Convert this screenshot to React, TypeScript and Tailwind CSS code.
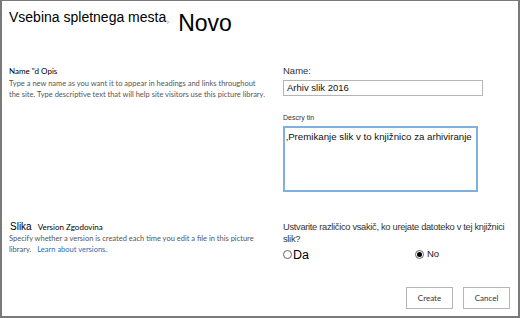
import { Fragment } from "react"

const ui = { fontFamily: 'Lato, "Liberation Sans", sans-serif' }

export default function App() {
  return (
    <div
      className="w-[520px] h-[318px] border-2 border-t border-[#7a7a7a] bg-white flex flex-col text-black"
      style={{ fontFamily: '"Liberation Sans", Arial, sans-serif' }}
    >
      {/* header */}
      <div className="flex items-start pl-[7px] pt-[5px] h-[60px]">
        <span className="text-[14px] leading-[20px] mt-[1px]">Vsebina spletnega mesta</span>
        <span className="text-[9px] text-gray-400 mt-[10px]">›</span>
        <span className="text-[23px] leading-[28px] ml-[9px] mt-[3px]">Novo</span>
      </div>

      {/* name / description */}
      <div className="grid grid-cols-[274px_1fr] pl-[7px] pr-[35px] h-[150px]">
        <div className="pt-[5px]" style={ui}>
          <div className="text-[8px] leading-[11px]">Name "d Opis</div>
          <p className="text-[7.5px] leading-[11px] text-[#555] mt-[1px] whitespace-nowrap">
            Type a new name as you want it to appear in headings and links throughout
            <br />
            the site. Type descriptive text that will help site visitors use this picture library.
          </p>
        </div>
        <div className="pt-[4px]">
          <div className="text-[9.5px] leading-[12px] text-[#333]">Name:</div>
          <div className="mt-[3px] h-[16px] w-[200px] border border-[#b5b5b5] text-[9.5px] leading-[14px] pl-[3px] text-[#111]">
            Arhiv slik 2016
          </div>
          <div className="mt-[17px] text-[7px] leading-[10px] text-[#333]">Descry tin</div>
          <div className="mt-[3px] h-[66px] w-[195px] border-2 border-[#7fb0e0] text-[9.7px] leading-[14px] pl-[1px] pt-[2px] text-[#111] whitespace-nowrap">
            ‚Premikanje slik v to knjižnico za arhiviranje
          </div>
        </div>
      </div>

      {/* versioning */}
      <div className="grid grid-cols-[274px_1fr] pl-[7px] pr-[10px] h-[66px]">
        <div className="pt-[10px]" style={ui}>
          <div className="flex items-baseline gap-[6px] text-[8px] leading-[11px]">
            <span className="text-[10px] pl-[1px]" style={{ fontFamily: '"Liberation Sans", sans-serif' }}>Slika</span>
            <span>Version Zgodovina</span>
          </div>
          <p className="text-[7.5px] leading-[10.5px] text-[#555] mt-[1px] whitespace-nowrap">
            Specify whether a version is created each time you edit a file in this picture
            <br />
            library.
            <span className="text-[#1f6fb8] ml-[6px]">Learn about versions.</span>
          </p>
        </div>
        <div className="pt-[10px]">
          <p className="text-[9.3px] leading-[12px] text-[#333] tracking-[-0.3px] w-[228px]">
            Ustvarite različico vsakič, ko urejate datoteko v tej knjižnici slik?
          </p>
          <div className="flex items-center">
            <div className="flex items-center w-[132px]">
              <span className="w-[9px] h-[9px] rounded-full border border-[#666] bg-white" />
              <span className="ml-[1px] text-[12.5px] leading-[15px] mt-[3px]">Da</span>
            </div>
            <div className="flex items-center">
              <span className="w-[9px] h-[9px] rounded-full border border-[#666] bg-white flex items-center justify-center">
                <span className="w-[5px] h-[5px] rounded-full bg-black" />
              </span>
              <span className="ml-[3px] text-[9.5px] leading-[12px] text-[#222]">No</span>
            </div>
          </div>
        </div>
      </div>

      {/* buttons */}
      <div className="flex justify-end gap-[10px] pr-[8px] mt-[10px]" style={ui}>
        {["Create", "Cancel"].map((label) => (
          <Fragment key={label}>
            <button className="w-[47px] h-[22px] border border-[#b5b5b5] bg-white text-[8px] text-[#333]">
              {label}
            </button>
          </Fragment>
        ))}
      </div>
    </div>
  )
}
